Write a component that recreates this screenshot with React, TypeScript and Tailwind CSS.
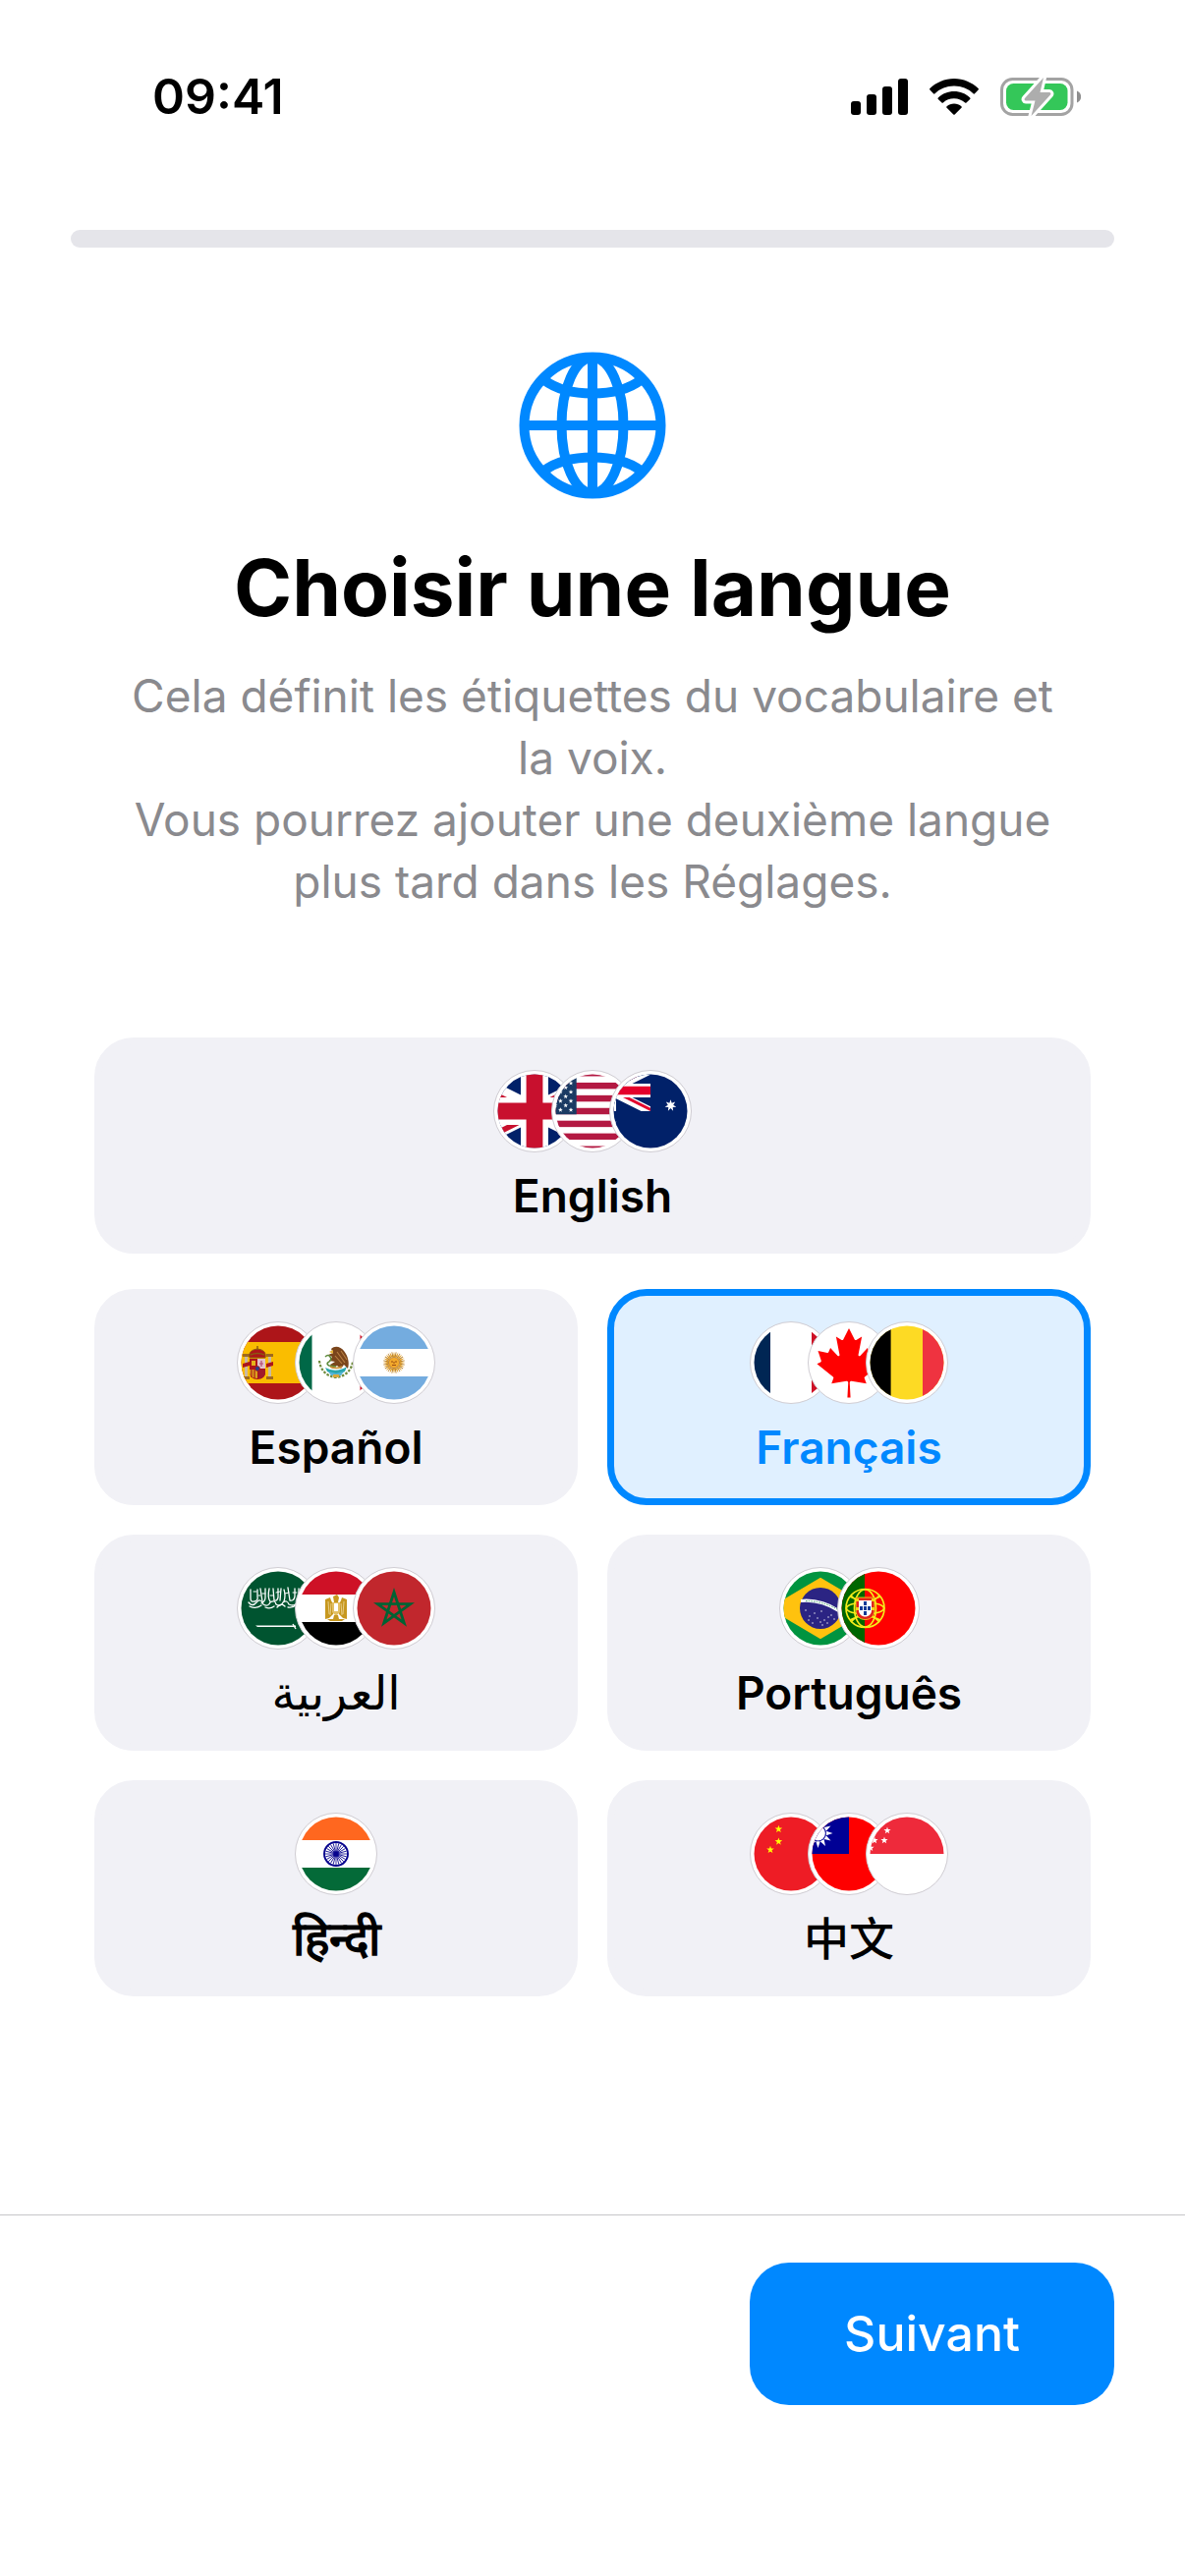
import { useState } from "react";
import type { ReactNode } from "react";

const star = (cx: number, cy: number, outer: number, inner: number, points = 5) =>
  Array.from({ length: points * 2 }, (_, i) => {
    const r = i % 2 === 0 ? outer : inner;
    const a = (Math.PI * i) / points - Math.PI / 2;
    return `${(cx + r * Math.cos(a)).toFixed(2)},${(cy + r * Math.sin(a)).toFixed(2)}`;
  }).join(" ");

const around = (count: number) => Array.from({ length: count }, (_, i) => (360 / count) * i);

const Star = ({ x, y, r, fill }: { x: number; y: number; r: number; fill: string }) => (
  <polygon points={star(x, y, r, r * 0.4)} fill={fill} />
);

// 60x30 units
const UnionJack = ({ id, red }: { id: string; red: string }) => (
  <g>
    <clipPath id={`${id}-box`}>
      <path d="M0 0h60v30H0z" />
    </clipPath>
    <clipPath id={`${id}-saltire`}>
      <path d="M30 15h30v15zv15H0zH0V0zV0h30z" />
    </clipPath>
    <g clipPath={`url(#${id}-box)`} fill="none">
      <path d="M0 0h60v30H0z" fill="#012169" />
      <path d="M0 0l60 30M60 0L0 30" stroke="#fff" strokeWidth="6" />
      <path d="M0 0l60 30M60 0L0 30" stroke={red} strokeWidth="4" clipPath={`url(#${id}-saltire)`} />
      <path d="M30 0v30M0 15h60" stroke="#fff" strokeWidth="10" />
      <path d="M30 0v30M0 15h60" stroke={red} strokeWidth="6" />
    </g>
  </g>
);

const Rows = ({ colors }: { colors: [string, string, string] }) => (
  <g>
    <path d="M0 0h84v28H0z" fill={colors[0]} />
    <path d="M0 28h84v28H0z" fill={colors[1]} />
    <path d="M0 56h84v28H0z" fill={colors[2]} />
  </g>
);

const flags: Record<string, ReactNode> = {
  gb: (
    <g transform="translate(-42 0) scale(2.8)">
      <UnionJack id="gb" red="#c8102e" />
    </g>
  ),
  us: (
    <g>
      <path d="M0 0h84v84H0z" fill="#fff" />
      {[0, 2, 4, 6, 8, 10, 12].map((i) => (
        <rect key={i} y={i * 6.46} width="84" height="6.46" fill="#b31942" />
      ))}
      <path d="M0 0h25.7v45.2H0z" fill="#1b3a63" />
      {[1, 2, 3, 4, 5, 6, 7, 8, 9].map((k) =>
        (k % 2 ? [20, 9.4] : [14.7, 4.1]).map((x) => (
          <Star key={`${k}-${x}`} x={x} y={k * 4.52} r={2.5} fill="#fff" />
        ))
      )}
    </g>
  ),
  au: (
    <g>
      <path d="M0 0h84v84H0z" fill="#012169" />
      <g transform="translate(-42 0) scale(1.4)">
        <UnionJack id="au" red="#e4002b" />
      </g>
      <polygon points={star(62.5, 36.3, 6, 2.8, 7)} fill="#fff" />
      <polygon points={star(-2, 60, 12, 6, 7)} fill="#fff" />
    </g>
  ),
  es: (
    <g>
      <path d="M0 0h84v84H0z" fill="#ad1519" />
      <path d="M0 21h84v42H0z" fill="#fabd00" />
      <g>
        <path d="M8 36h3v20H8zM32 36h3v20h-3z" fill="#c9b9a4" />
        <path d="M6 33h7v3H6zM30 33h7v3h-7zM6 56h7v3H6zM30 56h7v3h-7z" fill="#a06a1c" />
        <path d="M6 43l7-2v4l-7 2zM30 43l7-2v4l-7 2z" fill="#ad1519" />
        <path d="M13 37c-1-6 2-8 8-9 6 1 9 3 8 9z" fill="#ad1519" stroke="#8a5a10" strokeWidth="1" />
        <path d="M21 25v4M14 34q7-3 14 0" stroke="#8a5a10" strokeWidth="1.4" fill="none" />
        <path d="M13 38h16v14c0 4-3 7-8 7s-8-3-8-7z" fill="#ad1519" />
        <path d="M21 38h8v10h-8z" fill="#e3c1cc" />
        <path d="M25 40v6M23 43h4" stroke="#b04a72" strokeWidth="1.2" />
        <path d="M15 40h4v5h-4z" fill="#e5b21a" />
        <path d="M13 49h8v9c-5 0-8-3-8-6z" fill="#d9a21c" />
        <path d="M15 49v8M18 49v9" stroke="#ad1519" strokeWidth="1.1" />
        <path d="M22 49h7v3c0 4-3 6-7 6z" fill="#a01b2c" />
        <circle cx="21" cy="48" r="2.4" fill="#24408f" stroke="#ad1519" strokeWidth=".8" />
      </g>
    </g>
  ),
  mx: (
    <g>
      <path d="M0 0h84v84H0z" fill="#fff" />
      <path d="M0 0h17.5v84H0z" fill="#006847" />
      <path d="M66.5 0H84v84H66.5z" fill="#ce1126" />
      <path d="M25 40c1 9 7 16 17 17 10-1 16-8 17-16" fill="none" stroke="#6f8b3c" strokeWidth="2.2" strokeDasharray="2.6 1.4" />
      <path d="M31 47q11 6 22-1l-2 5q-9 5-18 0z" fill="#2aa7ae" />
      <path d="M34 51l8 2 8-2-3 4h-10z" fill="#56b5d8" />
      <path d="M39 54h6v3h-6z" fill="#d8a93c" />
      <path d="M37 28c4-4 10-2 13 2 4 5 6 12 4 18l-4-4-3 4-4-3-5 3-2-4 5-3-6-1 3-4-4-2 5-2z" fill="#7a451c" />
      <path d="M43 31l8 11M41 35l7 8M47 30l6 9" stroke="#b98244" strokeWidth="1.1" />
      <path d="M31 36q3-3 5 0t-1 5q-4 2 0 4l7 1" fill="none" stroke="#5c8a3a" strokeWidth="1.5" />
      <path d="M35 31l4-2v4z" fill="#e1b13a" />
      <path d="M36 46q6 3 12 0" stroke="#c98f33" strokeWidth="1.5" fill="none" />
    </g>
  ),
  ar: (
    <g>
      <Rows colors={["#74acdf", "#fff", "#74acdf"]} />
      {around(32).map((a, i) => (
        <path
          key={a}
          d={i % 2 ? "M41.4 36h1.2l-.2-5h-.8z" : "M41 36h2l-1-5.5z"}
          fill={i % 2 ? "#b9822c" : "#e09a1e"}
          transform={`rotate(${a} 42 42)`}
        />
      ))}
      <circle cx="42" cy="42" r="5.6" fill="#f2a92c" stroke="#a8681a" strokeWidth=".7" />
      <path d="M39 41h2M43 41h2M40 44.5h4M42 41v2" stroke="#85340a" strokeWidth=".8" />
    </g>
  ),
  fr: (
    <g>
      <path d="M0 0h84v84H0z" fill="#fff" />
      <path d="M0 0h21v84H0z" fill="#002654" />
      <path d="M63 0h21v84H63z" fill="#ce1126" />
    </g>
  ),
  ca: (
    <g>
      <path d="M0 0h84v84H0z" fill="#fff" />
      <path
        transform="translate(42 42) scale(.0175)"
        fill="#f00"
        d="m-90 2030 45-863a95 95 0 0 0-111-98l-859 151 116-320a65 65 0 0 0-20-73l-941-762 212-99a65 65 0 0 0 34-79l-186-572 542 115a65 65 0 0 0 73-38l105-247 423 454a65 65 0 0 0 111-57l-204-1052 327 189a65 65 0 0 0 91-27l332-652 332 652a65 65 0 0 0 91 27l327-189-204 1052a65 65 0 0 0 111 57l423-454 105 247a65 65 0 0 0 73 38l542-115-186 572a65 65 0 0 0 34 79l212 99-941 762a65 65 0 0 0-20 73l116 320-859-151a95 95 0 0 0-111 98l45 863z"
      />
    </g>
  ),
  be: (
    <g>
      <path d="M0 0h84v84H0z" fill="#fdda24" />
      <path d="M0 0h25.6v84H0z" fill="#000" />
      <path d="M58 0h26v84H58z" fill="#ef3340" />
    </g>
  ),
  sa: (
    <g>
      <path d="M0 0h84v84H0z" fill="#005430" />
      <g fill="none" stroke="#fff" strokeWidth="1.3" strokeLinecap="round">
        <path d="M14 23v9q0 4 4 3t3-5v-7M24 22l2 13M29 22v9q0 4-4 6M33 22q-2 9 1 13M37 22l1 12q3 1 4-3v-9M45 22l-1 12M48 23q2 6 0 12M52 21l2 13q4 1 5-4v-8M63 22v14" />
        <path d="M12 36q4 5 8 0t7 2q5 3 7-2 5-3 6 2 5 3 7-2 4-3 6 2 6 3 9-3" />
        <path d="M13 40q7 3 12-1M29 41q5 2 9-1M41 41q4-5 8-1M52 41q5 1 9-3" />
        <path d="M17 25h3M26 27h3M40 26l4-1M49 27l4-1M34 29h3M22 29h2M57 26h4" strokeWidth="1" />
      </g>
      <path d="M19 59.5h41V61H21z" fill="#fff" />
      <path d="M57 58l3 5" stroke="#fff" strokeWidth="1.4" />
    </g>
  ),
  eg: (
    <g>
      <Rows colors={["#ce1126", "#fff", "#000"]} />
      <g fill="#c7981f">
        <path d="M31 33l5-2 1 3 2 4v10l-4 4-4 1z" />
        <path d="M53 33l-5-2-1 3-2 4v10l4 4 4 1z" />
        <path d="M39 30l4-2 2 3-1 5h-4z" />
        <path d="M38 36h8v10l-4 4-4-4z" fill="#e3c063" />
        <path d="M40 37h4v8h-4z" fill="#fff" />
        <path d="M33 53h18l-3 2H36z" />
        <path d="M40 49h4l1 4h-6z" />
      </g>
      <path d="M34 35l1 13M37 37l-1 12M50 35l-1 13M47 37l1 12" stroke="#f3e2b0" strokeWidth=".7" />
    </g>
  ),
  ma: (
    <g>
      <path d="M0 0h84v84H0z" fill="#c1272d" />
      <path
        d="M42 25.5l10.3 31.7-27-19.6h33.4l-27 19.6z"
        fill="none"
        stroke="#006233"
        strokeWidth="2.8"
      />
    </g>
  ),
  br: (
    <g>
      <path d="M0 0h84v84H0z" fill="#009440" />
      <path d="M42 10.7L95 42 42 73.3-11 42z" fill="#ffc20e" />
      <circle cx="42" cy="42" r="21" fill="#2b2483" />
      <path d="M22 34.5q20-2 38.5 10" fill="none" stroke="#fff" strokeWidth="3.2" />
      <path d="M27 34.5q17 0 32 8.5" fill="none" stroke="#3b9a6b" strokeWidth="1" strokeDasharray="1.5 1.2" />
      <g fill="#fff">
        {[[27, 44], [31, 50], [30, 54], [36, 47], [39, 52], [42, 56], [46, 54], [50, 51], [53, 49], [56, 53], [44, 59], [34, 57], [49, 57], [43, 45]].map(
          ([x, y]) => (
            <circle key={`${x}-${y}`} cx={x} cy={y} r=".7" />
          )
        )}
      </g>
    </g>
  ),
  pt: (
    <g>
      <path d="M0 0h84v84H0z" fill="#f00" />
      <path d="M0 0h28v84H0z" fill="#060" />
      <g fill="none" stroke="#f5ec1a" strokeWidth="1.7">
        <circle cx="28.5" cy="42" r="19.5" />
        <ellipse cx="28.5" cy="42" rx="19" ry="6" />
        <ellipse cx="28.5" cy="42" rx="11" ry="19" />
        <path d="M13 30q15 8 31 0M13 54q15-8 31 0M14 29l29 27M43 29L14 56" />
      </g>
      <path d="M19 31h19v13c0 6-4 9.5-9.5 9.5S19 50 19 44z" fill="#e0251c" stroke="#f5ec1a" strokeWidth=".8" />
      <path d="M22 34h13v10c0 4-3 6.5-6.5 6.5S22 48 22 44z" fill="#fff" />
      <path d="M27 35h3v4h-3zM27 40h3v4h-3zM27 45h3v4h-3zM23 40h3v4h-3zM31 40h3v4h-3z" fill="#123a96" />
      <path d="M19 32h3v3h-3zM35 32h3v3h-3zM19 41h3v3h-3zM35 41h3v3h-3z" fill="#f5d21a" />
    </g>
  ),
  in: (
    <g>
      <Rows colors={["#ff671f", "#fff", "#046a38"]} />
      <g stroke="#06038d" fill="none">
        <circle cx="42" cy="42" r="12" strokeWidth="1.9" />
        {around(24).map((a) => (
          <path key={a} d="M42 40v-9" strokeWidth=".8" transform={`rotate(${a} 42 42)`} />
        ))}
      </g>
      <circle cx="42" cy="42" r="2.6" fill="#06038d" />
    </g>
  ),
  cn: (
    <g>
      <path d="M0 0h84v84H0z" fill="#ee1c25" />
      <Star x={29.4} y={16.8} r={4} fill="#ff0" />
      <Star x={29.4} y={29.4} r={4} fill="#ff0" />
      <Star x={21} y={37.8} r={4} fill="#ff0" />
    </g>
  ),
  tw: (
    <g>
      <path d="M0 0h84v84H0z" fill="#fe0000" />
      <path d="M0 0h42v42H0z" fill="#000095" />
      <circle cx="10.5" cy="21" r="7.4" fill="#fff" />
      {around(12).map((a) => (
        <path key={a} d="M8.3 12.7h4.4L10.5 6z" fill="#fff" transform={`rotate(${a} 10.5 21)`} />
      ))}
    </g>
  ),
  sg: (
    <g>
      <path d="M0 0h84v84H0z" fill="#fff" />
      <path d="M0 0h84v42H0z" fill="#ee2a3b" />
      <Star x={22} y={18.2} r={3.8} fill="#fff" />
      <Star x={19} y={28.2} r={3.8} fill="#fff" />
      <Star x={9} y={28.2} r={3.8} fill="#fff" />
      <Star x={5} y={36} r={3.8} fill="#fff" />
    </g>
  ),
};

const Flag = ({ code }: { code: string }) => (
  <svg className="-ml-[25px] size-[84px] first:ml-0" viewBox="0 0 84 84" aria-hidden="true">
    <clipPath id={`flag-${code}`}>
      <circle cx="42" cy="42" r="37.5" />
    </clipPath>
    <circle cx="42" cy="42" r="41.5" fill="#fff" stroke="#cfccd2" strokeWidth="1" />
    <g clipPath={`url(#flag-${code})`}>{flags[code]}</g>
  </svg>
);

const Signal = () => (
  <svg className="h-[37px] w-[58px]" viewBox="0 0 58 37" aria-hidden="true">
    <rect x="0" y="23" width="10" height="14" rx="3" />
    <rect x="16" y="16" width="10" height="21" rx="3" />
    <rect x="32" y="8" width="10" height="29" rx="3" />
    <rect x="48" y="0" width="10" height="37" rx="3" />
  </svg>
);

const Wifi = () => (
  <svg className="h-[37px] w-[50px]" viewBox="0 0 50 37" aria-hidden="true">
    <path d="M25 0C15.5 0 6.8 3.8.4 10.1a1 1 0 0 0 0 1.4L4 15.2a1 1 0 0 0 1.5 0A28 28 0 0 1 25 7.6a28 28 0 0 1 19.5 7.6 1 1 0 0 0 1.5 0l3.6-3.7a1 1 0 0 0 0-1.4C43.2 3.8 34.5 0 25 0z" />
    <path d="M25 13c-6.2 0-12 2.4-16.2 6.4a1 1 0 0 0 0 1.5l3.7 3.6a1 1 0 0 0 1.4 0A16.3 16.3 0 0 1 25 20.3c4.3 0 8.2 1.6 11.1 4.2a1 1 0 0 0 1.4 0l3.7-3.6a1 1 0 0 0 0-1.5C37 15.4 31.2 13 25 13z" />
    <path d="M25 25.5c-2.8 0-5.4 1-7.4 2.7a1 1 0 0 0 0 1.5l6.7 6.8a1 1 0 0 0 1.4 0l6.7-6.8a1 1 0 0 0 0-1.5c-2-1.7-4.6-2.7-7.4-2.7z" />
  </svg>
);

const Battery = () => (
  <svg className="h-[41px] w-[82px]" viewBox="0 0 82 41" aria-hidden="true">
    <rect x="1.5" y="2.5" width="71.5" height="36" rx="11" fill="none" stroke="#a3a3a3" strokeWidth="3" />
    <path d="M78 14.5c2.5 1 4.2 3.3 4.2 6s-1.7 5-4.2 6z" fill="#8e8e8e" />
    <rect x="6" y="7" width="62.5" height="27" rx="7.5" fill="#34c759" />
    <path
      d="M44 1L25 22c-.9 1-.3 2.5 1 2.5h9.5L31.5 40 51 18.5c.9-1 .3-2.5-1-2.5h-9.5z"
      fill="#adadad"
      stroke="#fff"
      strokeWidth="6"
      strokeLinejoin="round"
      paintOrder="stroke"
    />
  </svg>
);

const Globe = () => (
  <svg
    className="size-[150px]"
    viewBox="0 0 150 150"
    fill="none"
    stroke="#0088ff"
    strokeWidth="10"
    strokeLinecap="round"
    aria-hidden="true"
  >
    <circle cx="75" cy="75" r="69.5" />
    <ellipse cx="75" cy="75" rx="31.5" ry="69" />
    <path d="M75 8v134M8 75h134" />
    <path d="M26 29c12 9 30 13.5 49 13.5S112 38 124 29" />
    <path d="M26 121c12-9 30-13.5 49-13.5s37 4.5 49 13.5" />
  </svg>
);

type Language = {
  code: string;
  label: string;
  countries: string[];
  text?: string;
};

const english: Language = { code: "en", label: "English", countries: ["gb", "us", "au"] };

const languages: Language[] = [
  { code: "es", label: "Español", countries: ["es", "mx", "ar"] },
  { code: "fr", label: "Français", countries: ["fr", "ca", "be"] },
  { code: "ar", label: "العربية", countries: ["sa", "eg", "ma"], text: "text-[48px] font-medium" },
  { code: "pt", label: "Português", countries: ["br", "pt"] },
  { code: "hi", label: "हिन्दी", countries: ["in"], text: "text-[48px] font-semibold" },
  { code: "zh", label: "中文", countries: ["cn", "tw", "sg"], text: "text-[46px] font-medium" },
];

type CardProps = {
  language: Language;
  selected: boolean;
  onSelect: (code: string) => void;
};

const LanguageCard = ({ language, selected, onSelect }: CardProps) => (
  <button
    type="button"
    aria-pressed={selected}
    onClick={() => onSelect(language.code)}
    className={`flex w-full flex-col items-center rounded-[40px] border-[7px] pt-[26px] pb-6 cursor-pointer ${
      selected
        ? "border-[#0088ff] bg-[#e0f0ff] text-[#0088ff]"
        : "border-[#f1f1f6] bg-[#f1f1f6] text-black"
    }`}
  >
    <span className="flex">
      {language.countries.map((country) => (
        <Flag key={country} code={country} />
      ))}
    </span>
    <span
      lang={language.code}
      className={`mt-4 leading-[56px] ${language.text ?? "text-[46px] font-semibold"}`}
    >
      {language.label}
    </span>
  </button>
);

export default function App() {
  const [selected, setSelected] = useState("fr");

  return (
    <div className="flex min-h-screen flex-col bg-white font-['Inter','Noto_Sans_CJK_SC','DejaVu_Sans',sans-serif] text-black">
      <header className="flex items-center justify-between pt-[70px] pr-[106px] pl-[155px]">
        <span className="text-[50px] leading-[56px] font-semibold">09:41</span>
        <div className="flex items-center gap-[22px]">
          <Signal />
          <Wifi />
          <Battery />
        </div>
      </header>

      <div className="mx-[72px] mt-[108px] h-[18px] rounded-full bg-[#e5e5ea]" />

      <main className="flex flex-1 flex-col px-24">
        <section className="mt-[106px] flex flex-col items-center px-6 text-center">
          <Globe />
          <h1 className="mt-[42px] text-[80px] leading-[96px] font-bold">Choisir une langue</h1>
          <p className="mt-[31px] text-[46px] leading-[63px] text-[#8a8a8e]">
            Cela définit les étiquettes du vocabulaire et la voix.
            <br />
            Vous pourrez ajouter une deuxième langue plus tard dans les Réglages.
          </p>
        </section>

        <section className="mt-[127px] pb-24">
          <LanguageCard language={english} selected={selected === "en"} onSelect={setSelected} />
          <div className="mt-9 grid grid-cols-2 gap-[30px]">
            {languages.map((language) => (
              <LanguageCard
                key={language.code}
                language={language}
                selected={selected === language.code}
                onSelect={setSelected}
              />
            ))}
          </div>
        </section>
      </main>

      <footer className="flex justify-end border-t border-[#c6c6c8] px-[72px] pt-12 pb-[174px]">
        <button
          type="button"
          className="cursor-pointer rounded-[40px] bg-[#0088ff] px-24 py-11 text-[50px] leading-[57px] font-medium text-white"
        >
          Suivant
        </button>
      </footer>
    </div>
  );
}
